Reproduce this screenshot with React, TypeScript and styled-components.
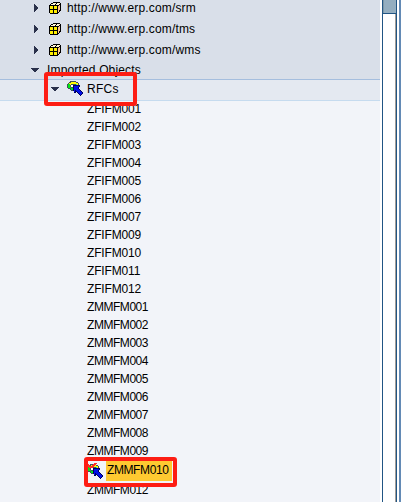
import React from "react";
import styled, { createGlobalStyle } from "styled-components";

const Global = createGlobalStyle`
  * { box-sizing: border-box; }
  body { margin: 0; overflow: hidden; }
`;
const Page = styled.div`
  display: flex; width: 401px; height: 502px; overflow: hidden;
  background: #fff; color: #000;
  font: 12px/18px "Liberation Sans", Arial, sans-serif;
`;
const Tree = styled.div`
  width: 380px; height: 502px; overflow: hidden; background: #f2f4f9;
`;
const Branch = styled.div`
  height: 79px; overflow: hidden; background: #d9dfe9;
`;
const Node = styled.div<{ $indent: number; $height: number }>`
  display: flex; align-items: center;
  height: ${p => p.$height}px; padding-left: ${p => p.$indent}px;
`;
const Hosts = styled.div`margin-top: -3px; height: 64px;`;
const Label = styled.span<{ $spacing?: number }>`
  white-space: nowrap; letter-spacing: ${p => p.$spacing ?? 0}px;
`;
const FolderRow = styled.div`
  position: relative; display: flex; align-items: center;
  height: 22px; padding: 0 0 2px 50px;
  border-top: 1px solid #a5bede; border-bottom: 1px solid #c6dbef;
  background: #e4e9f1;
`;
const Leaf = styled.div<{ $tight?: boolean }>`
  height: 18px; padding-left: 87px; white-space: nowrap;
  letter-spacing: ${p => (p.$tight ? -0.45 : -0.15)}px;
`;
const Leaves = styled.div`margin-top: -1px;`;
const Selected = styled.div`
  position: relative; display: flex; align-items: flex-end; height: 21px; padding-left: 87px;
`;
const SelectedLabel = styled.span`
  width: 66px; height: 20px; line-height: 19px; background: #fec931; white-space: nowrap;
  padding-left: 1px; letter-spacing: -0.4px;
`;
const Mark = styled.div<{ $x: number; $y: number; $w: number; $h: number }>`
  position: absolute; left: ${p => p.$x}px; top: ${p => p.$y}px;
  width: ${p => p.$w}px; height: ${p => p.$h}px;
  border: 4px solid #fd1d14; border-radius: 3px; z-index: 1;
`;
const ScrollBar = styled.div`
  width: 15px; margin-left: 2px; height: 502px; background: #fff;
  border-left: 1px solid #215584; border-right: 1px solid #215584;
  box-shadow: inset -1px 0 #a29d99;
`;
const Thumb = styled.div`
  height: 14px; background: #94aec0; border-bottom: 1px solid #215584;
  box-shadow: inset 1px 0 #7d98a8;
`;
const Edge = styled.div`width: 2px; margin-left: auto; background: #638ab5;`;
const Glyph = styled.svg`flex: none; shape-rendering: crispEdges;`;

const Closed = () => (
  <Glyph width="15" height="12"><path d="M0 2h1v1h1v1h1v1h1v2h-1v1h-1v1h-1v1H0z" fill="#29304a" /></Glyph>
);
const Open = () => (
  <Glyph width="17" height="12"><path d="M1 4h8v1h-1v1h-1v1h-1v1h-2v-1h-1v-1h-1v-1h-1z" fill="#29304a" /></Glyph>
);
const Cube = () => (
  <Glyph width="18" height="14">
    <path d="M4 1h7v1h1v8h-1v1h-1v1H9v1H1v-1H0V4h1V3h1V2h2z" fill="#000" />
    <path d="M4 2h3v1H6v1H2V3h2zM8 2h3v1h-1v1H7V3h1z" fill="#fff7d6" />
    <path d="M1 5h3v3H1zM5 5h3v3H5zM1 9h3v3H1zM5 9h3v3H5z" fill="#ffef00" />
    <path d="M10 4h1v5h-1v2H9V5h1z" fill="#ffc78c" />
  </Glyph>
);
const Rfc = ({ marked = false }: { marked?: boolean }) => (
  <Glyph width={marked ? 19 : 20} height={marked ? 18 : 16} viewBox={marked ? "0 -1 19 18" : "0 0 20 16"}>
    <path d="M3 0h6v1h2v1h1v5h-1v2H9v1H4V9H3V8H1V7H0V3h1V2h1V1h1z" fill="#42515a" />
    <path d="M4 1h5v1h2v2H9V3H4v1H2V2h2z" fill="#ff0" />
    <path d="M1 3h2v3h1v1h2v2H4V7H1z" fill="#00e818" />
    <path d="M9 3h1v1h1v3H9z" fill="#00e7ef" />
    <path d="M4 4h5v2H4z" fill="#fff" />
    <g transform="translate(1 0)">
      <path d="M5 4h7v2h-1v2h1v1h1v1h1v1h1v2h-1v1h-1v1h-1v-1h-1v-1h-1v-1H9v-1H8v1H6v-2H5z" fill="#00005a" />
      <path d="M6 5h5v1h-1v2h1v1h1v1h1v1h1v2h-1v1h-1v-1h-1v-1h-1v-1H9v-1H8v-1H7v2H6z" fill="#0010e8" />
    </g>
    {marked && <path d="M0 0h2v1h1v1h2V1h1V0h1v-1h3v1H9v1H8v1H7v1H6v1H2V3H1V2H0z" fill="#ff3028" />}
  </Glyph>
);
const hosts = ["srm", "tms", "wms"];
const leaves = [
  ...["001", "002", "003", "004", "005", "006", "007", "009", "010", "011", "012"].map(n => "ZFIFM" + n),
  ...["001", "002", "003", "004", "005", "006", "007", "008", "009"].map(n => "ZMMFM" + n),
];

export default function App() {
  return (
    <Page>
      <Global />
      <Tree>
        <Branch>
          <Hosts>
            {hosts.map(h => (
              <Node key={h} $indent={34} $height={21}><Closed /><Cube /><Label $spacing={0.16}>http://www.erp.com/{h}</Label></Node>
            ))}
          </Hosts>
          <Node $indent={30} $height={18}><Open /><Label $spacing={0.16}>Imported Objects</Label></Node>
        </Branch>
        <FolderRow>
          <Open /><Rfc /><Label $spacing={0.3}>RFCs</Label>
          <Mark $x={44} $y={-8} $w={93} $h={34} />
        </FolderRow>
        <Leaves>
          {leaves.map(l => <Leaf key={l} $tight={l[1] === "M"}>{l}</Leaf>)}
          <Selected>
            <Rfc marked /><SelectedLabel>ZMMFM010</SelectedLabel>
            <Mark $x={84} $y={-3} $w={93} $h={30} />
          </Selected>
          <Leaf $tight>ZMMFM012</Leaf>
        </Leaves>
      </Tree>
      <ScrollBar><Thumb /></ScrollBar>
      <Edge />
    </Page>
  );
}
